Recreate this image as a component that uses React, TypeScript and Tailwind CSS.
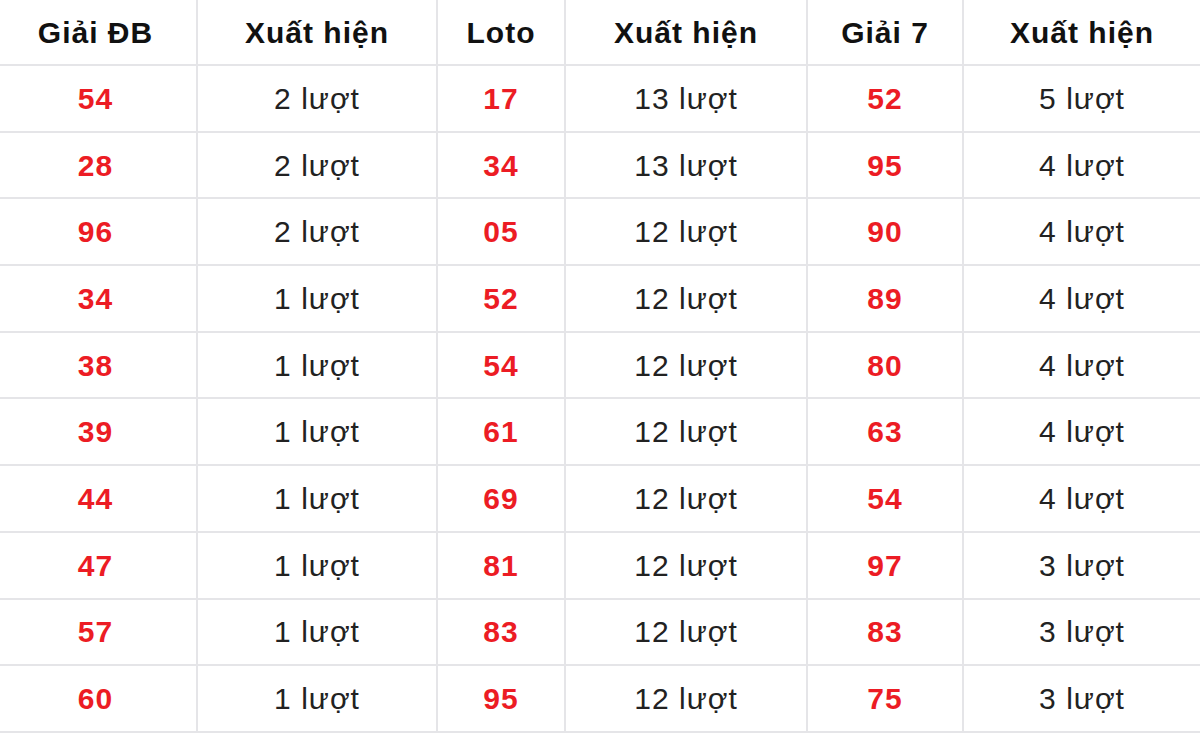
const ROWS: [string, string, string, string, string, string][] = [
  ["54", "2 lượt", "17", "13 lượt", "52", "5 lượt"],
  ["28", "2 lượt", "34", "13 lượt", "95", "4 lượt"],
  ["96", "2 lượt", "05", "12 lượt", "90", "4 lượt"],
  ["34", "1 lượt", "52", "12 lượt", "89", "4 lượt"],
  ["38", "1 lượt", "54", "12 lượt", "80", "4 lượt"],
  ["39", "1 lượt", "61", "12 lượt", "63", "4 lượt"],
  ["44", "1 lượt", "69", "12 lượt", "54", "4 lượt"],
  ["47", "1 lượt", "81", "12 lượt", "97", "3 lượt"],
  ["57", "1 lượt", "83", "12 lượt", "83", "3 lượt"],
  ["60", "1 lượt", "95", "12 lượt", "75", "3 lượt"],
];

const HEADERS = ["Giải ĐB", "Xuất hiện", "Loto", "Xuất hiện", "Giải 7", "Xuất hiện"];

export default function App() {
  return (
    <main className="w-[1200px] h-[748px] bg-white overflow-hidden font-['Liberation_Sans',Arial,sans-serif] tracking-[1px]">
      <div className="grid grid-cols-[198px_240px_128px_242px_156px_236px]">
        {HEADERS.map((h, i) => (
          <div
            key={i}
            className={`h-[66px] flex items-center justify-center border-b-2 border-[#e5e5e8] text-[30px] font-bold text-[#111] ${
              i < 5 ? "border-r-2" : ""
            } ${i === 0 ? "pr-[5px]" : ""}`}
          >
            {h}
          </div>
        ))}
        {ROWS.map((row, r) =>
          row.map((cell, c) => (
            <div
              key={`${r}-${c}`}
              className={`h-[66.7px] flex items-center justify-center border-b-2 border-[#e5e5e8] text-[30px] ${
                c < 5 ? "border-r-2" : ""
              } ${c === 0 ? "pr-[5px]" : ""} ${c % 2 === 0 ? "font-bold text-[#ec1c24]" : "text-[#222]"}`}
            >
              {cell}
            </div>
          ))
        )}
      </div>
    </main>
  );
}
